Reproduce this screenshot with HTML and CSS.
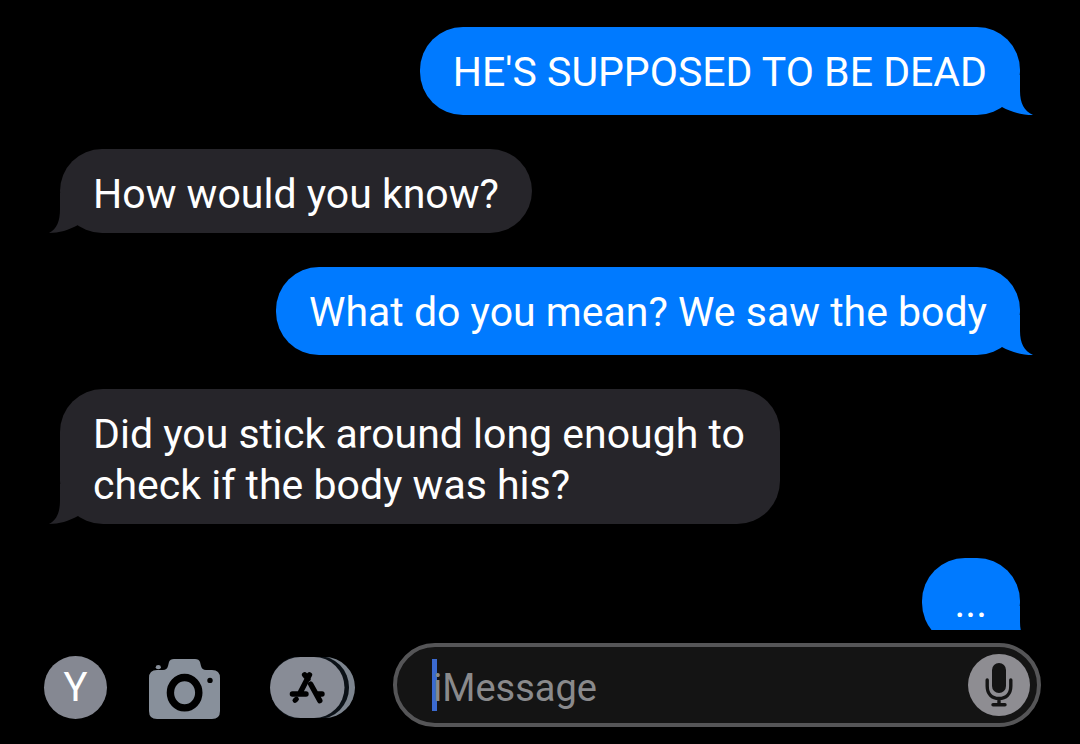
FILE: index.html
```html
<!DOCTYPE html>
<html lang="en">
<head>
  <meta charset="UTF-8" />
  <meta name="viewport" content="width=device-width, initial-scale=1.0"/>
  <title>Messages</title>
  <link rel="stylesheet" href="styles.css">
</head>
<body>
  <main class="thread">
    <div class="message sent">
      HE'S SUPPOSED TO BE DEAD
      <svg class="tail" viewBox="0 0 32 40" aria-hidden="true"><path d="M0 0H18V16C18 28 22 36 31 40C20 40 9 37 0 32Z"/></svg>
    </div>
    <div class="message received">
      How would you know?
      <svg class="tail" viewBox="0 0 32 40" aria-hidden="true"><path d="M32 0H14V16C14 28 11 36 3 40C13 40 23 37 32 32Z"/></svg>
    </div>
    <div class="message sent">
      What do you mean? We saw the body
      <svg class="tail" viewBox="0 0 32 40" aria-hidden="true"><path d="M0 0H18V16C18 28 22 36 31 40C20 40 9 37 0 32Z"/></svg>
    </div>
    <div class="message received">
      Did you stick around long enough to check if the body was his?
      <svg class="tail" viewBox="0 0 32 40" aria-hidden="true"><path d="M32 0H14V16C14 28 11 36 3 40C13 40 23 37 32 32Z"/></svg>
    </div>
    <div class="message sent">
      ...
      <svg class="tail" viewBox="0 0 32 40" aria-hidden="true"><path d="M0 0H18V16C18 28 22 36 31 40C20 40 9 37 0 32Z"/></svg>
    </div>
  </main>

  <form class="composer">
    <button type="button" class="avatar">Y</button>

    <button type="button" class="camera" aria-label="Camera">
      <svg width="71" height="60" viewBox="0 0 71 60">
        <path fill="#88909b" d="M8 11H14Q18 11 19 7L20 3Q21 0 25 0H46Q50 0 51 3L52 7Q53 11 57 11H63Q71 11 71 19V52Q71 60 63 60H8Q0 60 0 52V19Q0 11 8 11Z"/>
        <ellipse cx="9.3" cy="8.2" rx="2.6" ry="2.1" fill="#88909b"/>
        <ellipse cx="35.6" cy="33.7" rx="14.2" ry="15.2" fill="none" stroke="#000" stroke-width="7.4"/>
        <circle cx="61" cy="21.4" r="2.7" fill="#000"/>
      </svg>
    </button>

    <button type="button" class="apps" aria-label="Apps">
      <svg width="85" height="61" viewBox="0 0 85 61">
        <rect x="20" width="65" height="61" rx="30.5" fill="#7d858f"/>
        <rect x="0" y="-1" width="79" height="63" rx="31" fill="#0b1117"/>
        <rect width="74.5" height="61" rx="30.5" fill="#888c96"/>
        <g fill="none" stroke="#000" stroke-width="5.4" stroke-linecap="round">
          <path d="M39.5 17.8L30.5 35M34.6 17.8L38 22M22.4 37H36"/>
          <path d="M40.6 27L49.8 43.6M47 37H52"/>
          <path d="M26.4 42.2L25 43.4" stroke-width="5"/>
        </g>
      </svg>
    </button>

    <div class="field">
      <span class="caret"></span>
      <input type="text" placeholder="iMessage" aria-label="iMessage">
      <button type="button" class="mic" aria-label="Dictate">
        <svg width="62" height="62" viewBox="0 0 62 62">
          <rect x="24" y="9" width="14" height="30" rx="7" fill="#141414"/>
          <path d="M19.2 26V32C19.2 40 24 44.5 31 44.5S42.8 40 42.8 32V26M31 45V50.5M25 50.8H37" fill="none" stroke="#141414" stroke-width="3.4" stroke-linecap="round"/>
        </svg>
      </button>
    </div>
  </form>
</body>
</html>
```
FILE: styles.css
```css
* {
  box-sizing: border-box;
}
body {
  margin: 0;
  height: 100vh;
  display: flex;
  flex-direction: column;
  background: #000;
  color: #fff;
  font-family: Roboto, sans-serif;
}
button {
  border: none;
  padding: 0;
  background: none;
  color: inherit;
  font-family: inherit;
  flex-shrink: 0;
  cursor: pointer;
}
svg {
  display: block;
}
.thread {
  flex: 1;
  min-height: 0;
  overflow: hidden;
  padding: 27px 60px 0;
  display: flex;
  flex-direction: column;
  align-items: flex-start;
  gap: 34px;
}
.message {
  position: relative;
  flex-shrink: 0;
  padding: 20px 33px 17px;
  border-radius: 43px;
  font-size: 41px;
  line-height: 51px;
}
.sent {
  align-self: flex-end;
  max-width: 80%;
  background: #007aff;
}
.received {
  max-width: 75%;
  padding-bottom: 13px;
  background: #26252a;
}
.tail {
  position: absolute;
  bottom: 0;
  width: 32px;
  height: 40px;
}
.sent .tail {
  right: -14px;
  fill: #007aff;
}
.received .tail {
  left: -14px;
  fill: #26252a;
}
.composer {
  display: flex;
  align-items: center;
  padding: 13px 39px 17px 44px;
}
.avatar {
  width: 63px;
  height: 63px;
  margin: 4px 42px 0 0;
  border-radius: 50%;
  background: #858892;
  font-size: 40px;
}
.camera {
  margin: 8px 50px 0 0;
}
.apps {
  margin: 4px 38px 0 0;
}
.field {
  position: relative;
  flex: 1;
  min-width: 0;
  height: 84px;
  display: flex;
  align-items: center;
  padding: 0 7px 0 36px;
  border: 4px solid #555557;
  border-radius: 42px;
  background: #141414;
}
.caret {
  position: absolute;
  left: 35px;
  top: 12px;
  width: 5px;
  height: 52px;
  background: #3b6ad0;
}
.field input {
  position: relative;
  flex: 1;
  min-width: 0;
  border: none;
  outline: none;
  padding: 6px 0 0;
  background: transparent;
  color: #fff;
  font-family: inherit;
  font-size: 38px;
}
.field input::placeholder {
  color: #8a8a8c;
}
.mic {
  border-radius: 50%;
  background: #8e8d92;
}
```
